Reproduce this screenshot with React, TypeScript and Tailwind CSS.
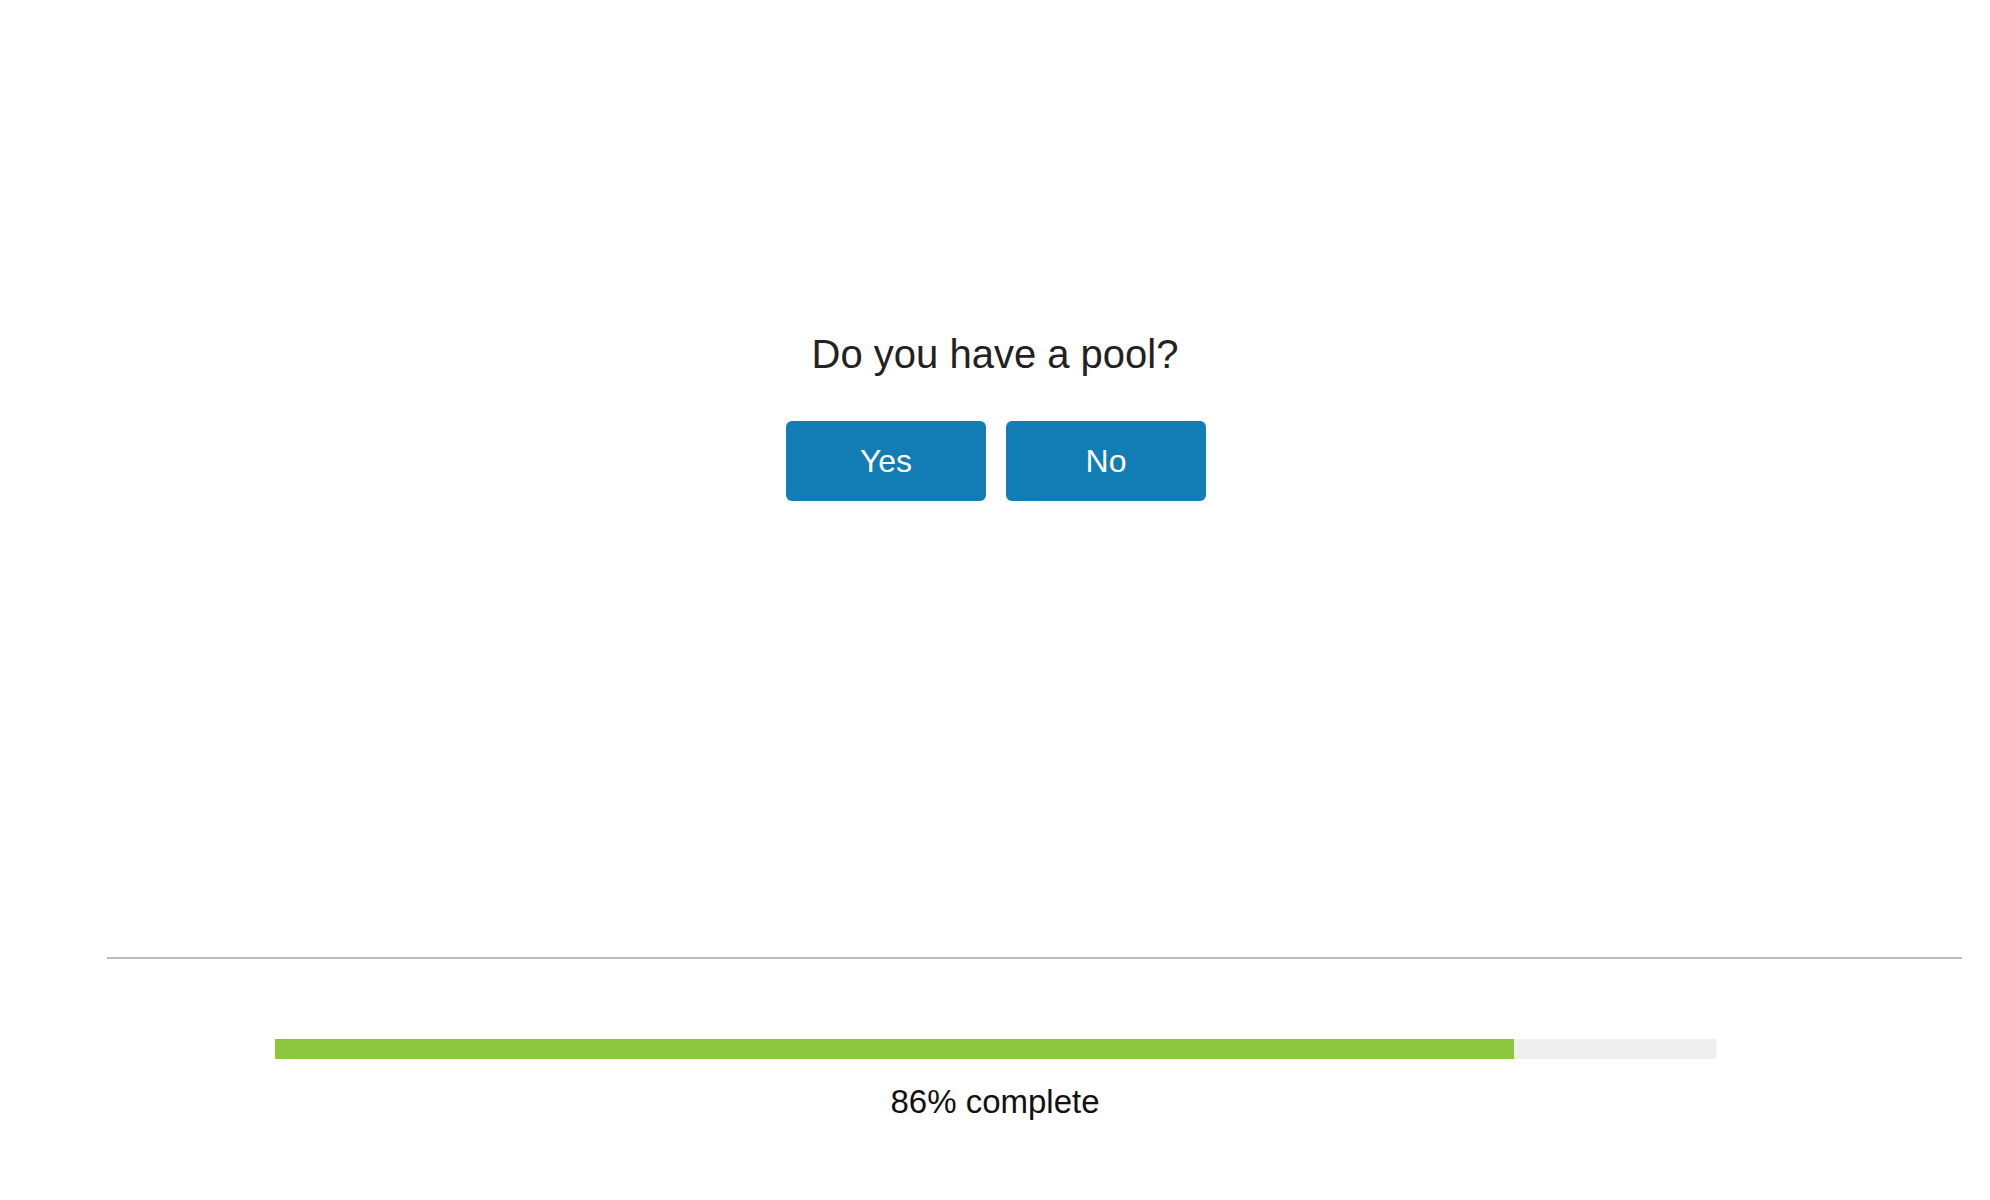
const progress = 86;

function ChoiceButton({ label }: { label: string }) {
  return (
    <button
      type="button"
      className="h-[80px] w-[200px] rounded-[6px] bg-[#127db4] text-[32px] leading-none text-white"
    >
      {label}
    </button>
  );
}

export default function App() {
  return (
    <div className="min-h-[1200px] w-full bg-white font-['Liberation_Sans',Arial,sans-serif]">
      <main className="flex flex-col items-center pt-[330px]">
        <h1 className="text-[40px] leading-[48px] text-[#222222]">Do you have a pool?</h1>
        <div className="ml-[2px] mt-[43px] flex gap-[20px]">
          <ChoiceButton label="Yes" />
          <ChoiceButton label="No" />
        </div>
      </main>

      <div className="ml-[107px] mr-[28px] mt-[456px] h-[2px] bg-[#bdbdbd]" />

      <footer className="flex flex-col items-center pt-[80px]">
        <div className="h-[20px] w-[1441px] bg-[#efefef]">
          <div className="h-full bg-[#8dc63f]" style={{ width: `${progress}%` }} />
        </div>
        <p className="mt-[23px] text-[33px] leading-[40px] text-[#111111]">{progress}% complete</p>
      </footer>
    </div>
  );
}
